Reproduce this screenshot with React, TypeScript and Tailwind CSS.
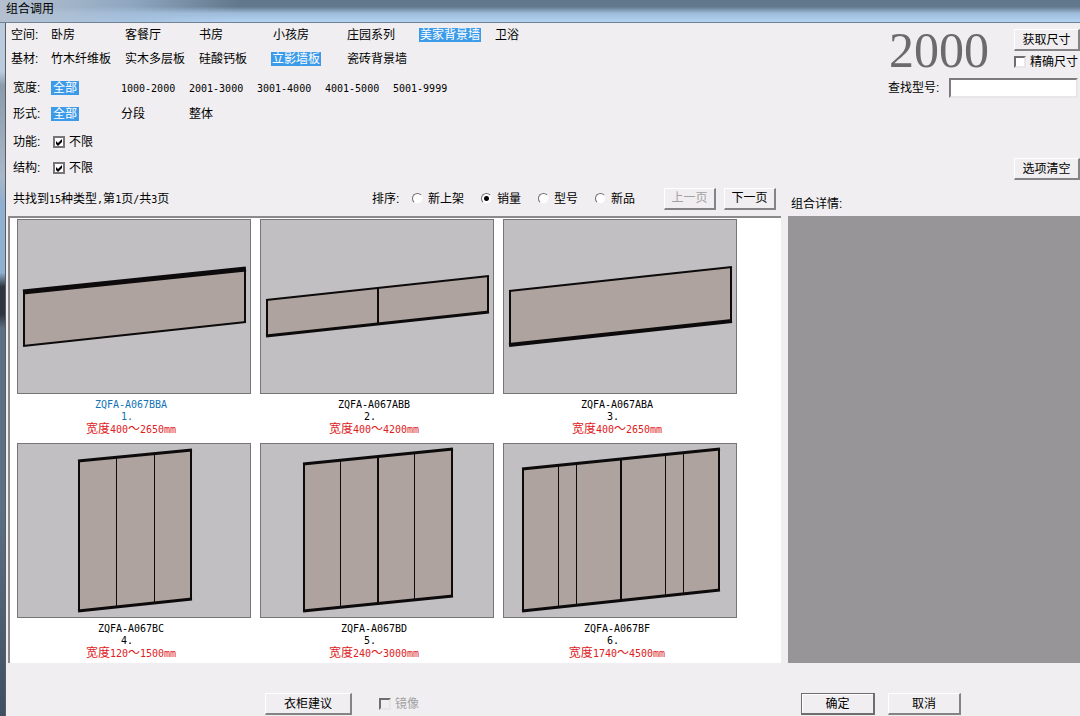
import { useState, type ButtonHTMLAttributes, type InputHTMLAttributes, type ReactNode } from "react"
import clsx from "clsx"

type Panel = {
  name: string
  range: string
  // x of the left / right edge, and y of top / bottom at each of them
  left: [number, number, number]
  right: [number, number, number]
  top: number
  bottom: number
  side: number
  lines?: [number, number][]
}

const spaces = ["卧房", "客餐厅", "书房", "小孩房", "庄园系列", "美家背景墙", "卫浴"]
const materials = ["竹木纤维板", "实木多层板", "硅酸钙板", "立影墙板", "瓷砖背景墙"]
const widths = ["全部", "1000-2000", "2001-3000", "3001-4000", "4001-5000", "5001-9999"]
const forms = ["全部", "分段", "整体"]
const sorts = ["新上架", "销量", "型号", "新品"]

const panels: Panel[] = [
  { name: "ZQFA-A067BBA", range: "400～2650", left: [7, 73, 127], right: [228, 50, 103], top: 5, bottom: 2, side: 2 },
  { name: "ZQFA-A067ABB", range: "400～4200", left: [7, 81, 117], right: [228, 57, 93], top: 2, bottom: 3, side: 2, lines: [[118, 2]] },
  { name: "ZQFA-A067ABA", range: "400～2650", left: [7, 72, 126], right: [228, 48, 102], top: 2, bottom: 4, side: 2 },
  { name: "ZQFA-A067BC", range: "120～1500", left: [62, 18, 168], right: [174, 7, 156], top: 3, bottom: 3, side: 2, lines: [[99.5, 1], [137.5, 1]] },
  { name: "ZQFA-A067BD", range: "240～3000", left: [44, 21, 168], right: [192, 6, 153], top: 3, bottom: 3, side: 2, lines: [[80.5, 1], [118, 2], [154.5, 1]] },
  { name: "ZQFA-A067BF", range: "1740～4500", left: [20, 26, 168], right: [216, 6, 147], top: 3, bottom: 3, side: 2, lines: [[55.5, 1], [73.5, 1], [118, 2], [162.5, 1], [180.5, 1]] },
]

function Num({ children }: { children: ReactNode }) {
  return <span className="font-['DejaVu_Sans_Mono',monospace] text-[10px]">{children}</span>
}

function PushButton({ className, primary, ...props }: { primary?: boolean } & ButtonHTMLAttributes<HTMLButtonElement>) {
  return (
    <button
      type="button"
      className={clsx(
        "h-[22px] shrink-0 whitespace-nowrap border-t border-r-2 border-b-2 border-l bg-[#f0eef0] leading-4 disabled:text-[#a3a1a3]",
        primary
          ? "border-t-[#6f6d6f] border-r-[#6f6d6f] border-b-[#6f6d6f] border-l-[#6f6d6f] inset-shadow-[1px_1px_0_#fff]"
          : "border-t-white border-r-[#858385] border-b-[#858385] border-l-white",
        className,
      )}
      {...props}
    />
  )
}

function Check({ label, gap = "gap-1", ...props }: { label: string; gap?: string } & InputHTMLAttributes<HTMLInputElement>) {
  return (
    <label className={clsx("flex items-center whitespace-nowrap", gap, props.disabled && "text-[#a3a1a3]")}>
      <span className="relative block size-3 shrink-0">
        <input
          type="checkbox"
          className="peer block size-3 appearance-none border-2 border-t-[#6f6d6f] border-l-[#6f6d6f] border-r-[#e8e6e8] border-b-[#e8e6e8] bg-white checked:border-[#777577] disabled:bg-[#f0eef0]"
          {...props}
        />
        <svg viewBox="0 0 12 12" className="pointer-events-none absolute inset-0 hidden size-3 peer-checked:block">
          <path d="M3 5v3l2 2 4-4V3L5 7Z" fill="#000" />
        </svg>
      </span>
      {label}
    </label>
  )
}

type FilterProps = {
  label: string
  items: string[]
  value: string
  onChange: (v: string) => void
  wide?: boolean
}

function FilterRow({ label, items, value, onChange, wide }: FilterProps) {
  return (
    <div className={clsx("flex items-center", wide ? "h-6 pl-[5px]" : "h-[26px] pl-[7px]")}>
      <span className={clsx("shrink-0", wide ? "w-10" : "w-[38px]")}>{label}:</span>
      {items.map((item, i) => (
        <span key={item} className={clsx("shrink-0", wide ? "w-[74px]" : i === 0 ? "w-[70px]" : "w-[68px]")}>
          <button
            type="button"
            aria-pressed={item === value}
            onClick={() => onChange(item)}
            className={clsx(
              "block whitespace-nowrap leading-[14px]",
              item === value && "bg-[#3c9be9] text-white",
              item === value && (wide ? "-ml-0.5 px-px" : "px-0.5"),
            )}
          >
            {/^\d/.test(item) ? <Num>{item}</Num> : item}
          </button>
        </span>
      ))}
    </div>
  )
}

function Thumb({ panel }: { panel: Panel }) {
  const [lx, lt, lb] = panel.left
  const [rx, rt, rb] = panel.right
  const at = (x: number, a: number, b: number) => a + ((b - a) * (x - lx)) / (rx - lx)
  return (
    <svg viewBox="1 1 232 173" className="block h-[175px] w-[234px] border border-[#777577] bg-[#c1bfc1]">
      <path d={`M${lx} ${lt}L${rx} ${rt}V${rb}L${lx} ${lb}Z`} fill="#aea39e" />
      <g stroke="#0c0a0b">
        <path d={`M${lx} ${lt}V${lb}M${rx} ${rt}V${rb}`} strokeWidth={panel.side} />
        {panel.lines?.map(([x, w]) => (
          <path key={x} d={`M${x} ${at(x, lt, rt)}V${at(x, lb, rb)}`} strokeWidth={w} />
        ))}
        <path d={`M${lx - 1} ${lt}L${rx + 1} ${rt}`} strokeWidth={panel.top} />
        <path d={`M${lx - 1} ${lb}L${rx + 1} ${rb}`} strokeWidth={panel.bottom} />
      </g>
    </svg>
  )
}

export default function App() {
  const [space, setSpace] = useState("美家背景墙")
  const [material, setMaterial] = useState("立影墙板")
  const [width, setWidth] = useState("全部")
  const [form, setForm] = useState("全部")
  const [sort, setSort] = useState("销量")
  const [selected, setSelected] = useState(0)

  return (
    <div className="flex min-h-screen flex-col bg-[#f0eef0] font-['Liberation_Sans','Noto_Sans_CJK_SC',sans-serif] text-xs text-black">
      <header className="h-[23px] border-b border-[#6f8296] bg-linear-to-b from-[#62788c] from-30% via-[#9dbbd9] via-60% to-[#b3d3f3]">
        <div className="h-full bg-linear-to-r from-[#b4c0cf] via-[#a3bcd8]/70 via-12% to-transparent to-22% pl-1.5">
          <h1 className="leading-[18px]">组合调用</h1>
        </div>
      </header>
      <div className="flex flex-1">
        <div className="w-[6px] shrink-0 border-r border-[#5d5b60] bg-[linear-gradient(#b9cbdd_0%,#b9cbdd_7%,#8a9bac_9%,#a8b8c8_22%,#8fb0d0_26%,#8fb0d0_36%,#2f3540_38%,#2f3540_42%,#5c7084_44%,#5c7084_70%,#3d4f60_100%)]" />
        <div className="flex min-w-0 flex-1 flex-col">
          <div className="flex gap-[7px]">
            <main className="flex min-w-0 flex-1 flex-col">
              <FilterRow label="空间" items={spaces} value={space} onChange={setSpace} wide />
              <FilterRow label="基材" items={materials} value={material} onChange={setMaterial} wide />
              <div className="h-1" />
              <FilterRow label="宽度" items={widths} value={width} onChange={setWidth} />
              <FilterRow label="形式" items={forms} value={form} onChange={setForm} />
              <div className="mt-0.5 flex h-[26px] items-center pl-[7px]">
                <span className="w-10">功能:</span>
                <Check label="不限" defaultChecked />
              </div>
              <div className="flex h-[26px] items-center pl-[7px]">
                <span className="w-10">结构:</span>
                <Check label="不限" defaultChecked />
              </div>
              <div className="mt-1 mb-1 flex h-[27px] items-center pl-[7px]">
                <p className="w-[359px] shrink-0">
                  共找到<Num>15</Num>种类型<Num>,</Num>第<Num>1</Num>页<Num>/</Num>共<Num>3</Num>页
                </p>
                <span className="w-10 shrink-0">排序:</span>
                <div className="flex flex-1 gap-[17px]">
                  {sorts.map((s) => (
                    <label key={s} className="flex items-center gap-[5px] whitespace-nowrap">
                      <input
                        type="radio"
                        name="sort"
                        checked={s === sort}
                        onChange={() => setSort(s)}
                        className="size-[11px] appearance-none rounded-full border border-t-[#6f6d6f] border-l-[#6f6d6f] border-r-[#f4f2f4] border-b-[#f4f2f4] bg-white checked:bg-[radial-gradient(circle,#000_2px,#fff_3px)]"
                      />
                      {s}
                    </label>
                  ))}
                </div>
                <div className="flex gap-2 pr-[5px]">
                  <PushButton disabled className="w-[52px]">上一页</PushButton>
                  <PushButton className="w-[52px]">下一页</PushButton>
                </div>
              </div>
              <div className="ml-0.5 flex h-[447px] flex-wrap content-start gap-x-[9px] gap-y-[7px] overflow-hidden border-t-2 border-l-2 border-[#8b898b] bg-white pt-px pl-[7px]">
                {panels.map((p, i) => (
                  <button
                    key={p.name}
                    type="button"
                    onClick={() => setSelected(i)}
                    className="block w-[234px] text-center"
                  >
                    <Thumb panel={p} />
                    <span className={clsx("block pt-1 pr-1.5 leading-3", selected === i && "text-[#1173b8]")}>
                      <span className="block h-3"><Num>{p.name}</Num></span>
                      <span className="block h-3 pr-2"><Num>{i + 1}.</Num></span>
                    </span>
                    <span className="block h-[14px] pr-1.5 leading-[14px] text-[#e0201c]">
                      宽度<Num>{p.range.split("～")[0]}</Num>～<Num>{p.range.split("～")[1]}mm</Num>
                    </span>
                  </button>
                ))}
              </div>
            </main>
            <aside className="flex w-[292px] shrink-0 flex-col">
              <div className="flex h-[53px] items-center justify-between pl-[101px]">
                <output className="font-['Liberation_Serif',serif] text-[50px] leading-[50px] text-[#6c6a6c]">2000</output>
                <div className="flex w-[66px] flex-col gap-[3px]">
                  <PushButton>获取尺寸</PushButton>
                  <Check label="精确尺寸" />
                </div>
              </div>
              <div className="flex h-6 items-center pr-0.5 pl-[100px]">
                <label htmlFor="model" className="w-[61px] shrink-0">查找型号:</label>
                <input
                  id="model"
                  className="h-5 min-w-0 flex-1 border-2 border-t-[#7d7b7d] border-l-[#7d7b7d] border-r-[#e8e6e8] border-b-[#e8e6e8] bg-white px-1 outline-none"
                />
              </div>
              <div className="mt-[58px] flex justify-end">
                <PushButton className="w-[66px]">选项清空</PushButton>
              </div>
              <h2 className="mt-[11px] h-[25px] pl-[3px] leading-[26px]">组合详情:</h2>
              <div className="flex-1 bg-[#979597]" />
            </aside>
          </div>
          <footer className="mt-[30px] flex items-center pr-[119px] pb-0.5 pl-[259px]">
            <PushButton className="w-[87px]">衣柜建议</PushButton>
            <div className="pl-[27px]">
              <Check label="镜像" disabled />
            </div>
            <div className="ml-auto flex gap-[13px]">
              <PushButton primary className="w-[74px]">确定</PushButton>
              <PushButton className="w-[73px]">取消</PushButton>
            </div>
          </footer>
        </div>
      </div>
    </div>
  )
}
